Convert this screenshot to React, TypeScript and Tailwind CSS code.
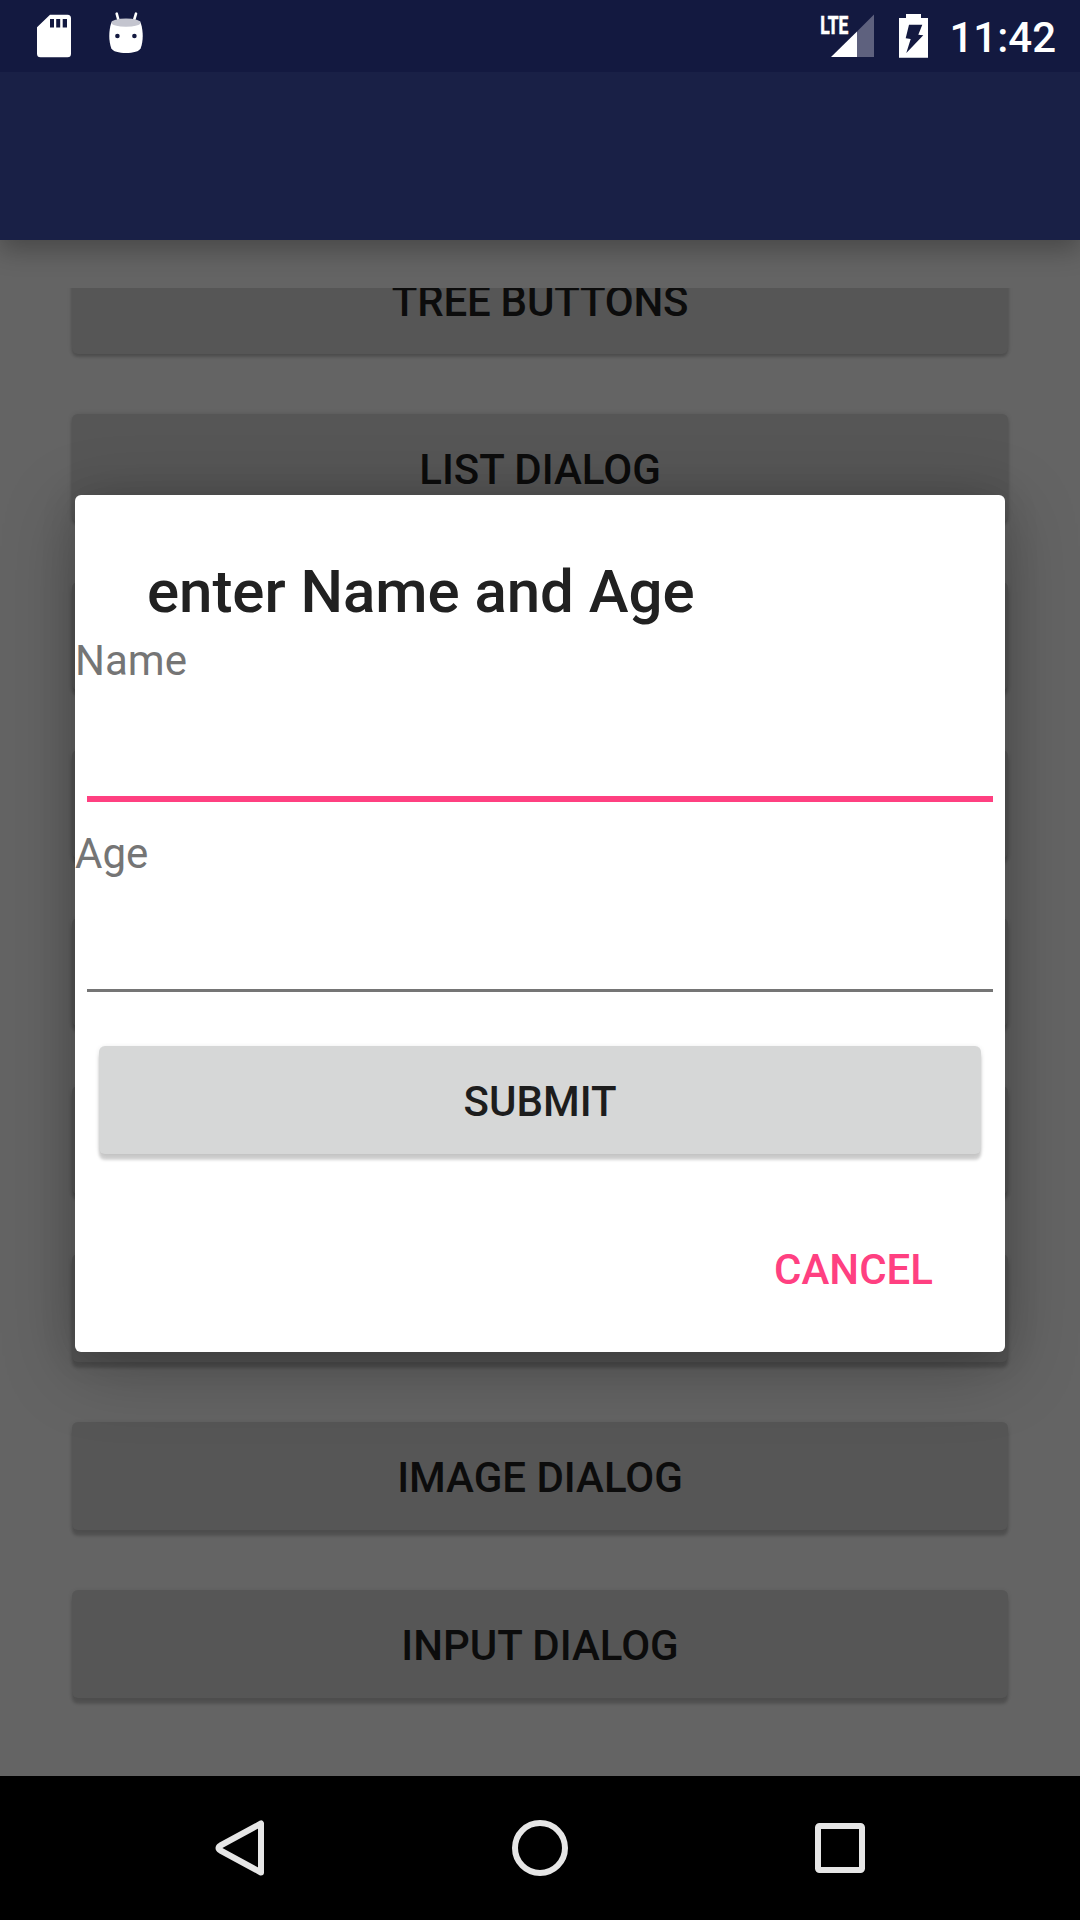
const NEAR_SHADOW = "shadow-[0_3px_3px_rgba(0,0,0,0.18),0_0_5px_rgba(0,0,0,0.12)]";
const FAR_SHADOW = "shadow-[0_6px_3px_rgba(0,0,0,0.18),0_1px_5px_rgba(0,0,0,0.1)]";

const ACTIONS = [
  { label: "Tree Buttons", className: `tracking-[-0.22px] ${NEAR_SHADOW}` },
  { label: "List Dialog", className: NEAR_SHADOW },
  { label: "", className: FAR_SHADOW },
  { label: "", className: FAR_SHADOW },
  { label: "", className: FAR_SHADOW },
  { label: "", className: FAR_SHADOW },
  { label: "", className: FAR_SHADOW },
  { label: "Image Dialog", className: FAR_SHADOW },
  { label: "Input Dialog", className: FAR_SHADOW },
];

function StatusBar() {
  return (
    <header className="flex h-[72px] shrink-0 items-start bg-[#131940] text-white">
      <svg className="ml-[37px] mt-[14px] h-[44px] w-[34px]" viewBox="37 14 34 44">
        <path
          fill="currentColor"
          fillRule="evenodd"
          d="M50 14.8H67.5Q71 14.8 71 18.3V53.7Q71 57.2 67.5 57.2H40.5Q37 57.2 37 53.7V27.3ZM50 19V27.5H54V19ZM56.2 19V27.5H60.2V19ZM62.7 19V27.5H67V19Z"
        />
      </svg>
      <svg className="ml-[37px] mt-[10px] h-[46px] w-[36px]" viewBox="108 10 36 46">
        <path d="M116.7 13.7 118.7 21M136 13.7 133.8 21" stroke="#fff" strokeWidth="2.6" strokeLinecap="round" />
        <path
          fill="#fff"
          d="M111.2 23C108.5 32 108.7 41 111.3 48.3C112.5 51.5 119 53 126 53S139.5 51.5 140.7 48.3C143.3 41 143.5 32 140.8 23Z"
        />
        <ellipse cx="126" cy="22.7" rx="14.8" ry="4.1" fill="#c4c5cf" />
        <circle cx="117.4" cy="36" r="2.3" fill="#131940" />
        <circle cx="134.4" cy="36" r="2.3" fill="#131940" />
      </svg>
      <svg className="ml-auto mt-[2px] h-[57px] w-[56px]" viewBox="819 2 56 57">
        <text
          x="820.3"
          y="33.7"
          textLength="28"
          lengthAdjust="spacingAndGlyphs"
          fontFamily="Roboto, sans-serif"
          fontWeight="700"
          fontSize="26.5"
          fill="#fff"
          stroke="#fff"
          strokeWidth="0.7"
        >
          LTE
        </text>
        <path d="M874 14.5V57H857V31.5Z" fill="#5e617e" />
        <path d="M857 31.5V57H831Z" fill="#fff" />
      </svg>
      <svg className="ml-[24px] mt-[14px] h-[44px] w-[29px]" viewBox="899 14 29 44">
        <path
          fill="#fff"
          fillRule="evenodd"
          d="M906 14H921V18H928V57.7H899V18H906ZM909 24.7 905.7 38.3 910.7 39 906.3 53 923.3 35.3 918.3 34.7 922.3 24.7Z"
        />
      </svg>
      <time className="mr-[24px] ml-[21px] mt-[12px] text-[42px] leading-[52px] font-medium">11:42</time>
    </header>
  );
}

function NavigationBar() {
  return (
    <nav className="flex h-[144px] shrink-0 items-center justify-center gap-[240px] bg-black text-[#e6e6e6]">
      <svg className="h-[60px] w-[60px]" viewBox="210 1818 60 60" fill="none" stroke="currentColor" strokeWidth="6" strokeLinejoin="round">
        <path d="M261 1823.5V1872.5L220.5 1850.5Q216.5 1848 220.5 1845.5Z" />
      </svg>
      <svg className="h-[60px] w-[60px]" viewBox="0 0 60 60" fill="none" stroke="currentColor" strokeWidth="6">
        <circle cx="30" cy="30" r="25" />
      </svg>
      <svg className="h-[60px] w-[60px]" viewBox="0 0 60 60" fill="none" stroke="currentColor" strokeWidth="6">
        <rect x="8" y="8" width="44" height="44" rx="1.5" />
      </svg>
    </nav>
  );
}

function InputDialog() {
  return (
    <section
      role="dialog"
      className="absolute top-[495px] left-[75px] flex h-[857px] w-[930px] flex-col rounded-[6px] bg-white shadow-[0_16px_72px_rgba(0,0,0,0.26),0_2px_36px_rgba(0,0,0,0.12)]"
    >
      <h1 className="mt-[61px] pl-[72px] text-[60px] leading-[72px] font-medium tracking-[-0.05px] text-[#212121]">
        enter Name and Age
      </h1>
      <label className="mt-[8px] h-[57px] text-[42px] leading-[50px] text-[#757575]">Name</label>
      <div className="mx-3 h-[109px] border-b-[6px] border-[#ff4081]" />
      <label className="mt-[27px] h-[57px] text-[42px] leading-[50px] text-[#757575]">Age</label>
      <div className="mx-3 h-[106px] border-b-[3px] border-[#757575]" />
      <button
        className={`mx-6 mt-[54px] h-[108px] rounded-[6px] bg-[#d6d7d7] pt-[3px] text-[42px] font-medium text-[#1d1d1d] uppercase ${FAR_SHADOW}`}
      >
        Submit
      </button>
      <button className="mt-[91px] mr-[72px] self-end text-[42px] leading-[50px] font-medium text-[#ff4081] uppercase">Cancel</button>
    </section>
  );
}

export default function App() {
  return (
    <div className="relative flex h-[1920px] w-[1080px] flex-col overflow-hidden bg-[#646464] font-['Roboto',sans-serif]">
      <StatusBar />
      <div className="h-[168px] shrink-0 bg-[#192046] shadow-[0_10px_24px_rgba(0,0,0,0.28)] [clip-path:inset(0_0_-60px_0)]" />
      <main className="mt-[48px] flex min-h-0 flex-1 flex-col overflow-hidden px-[72px]">
        <div className="-mt-[42px] flex flex-col gap-[60px]">
          {ACTIONS.map(({ label, className }, index) => (
            <button
              key={index}
              className={`h-[108px] shrink-0 rounded-[6px] bg-[#565656] pt-[3px] text-[42px] font-medium text-[#0c0c0c] uppercase ${className}`}
            >
              {label}
            </button>
          ))}
        </div>
      </main>
      <NavigationBar />
      <InputDialog />
    </div>
  );
}
